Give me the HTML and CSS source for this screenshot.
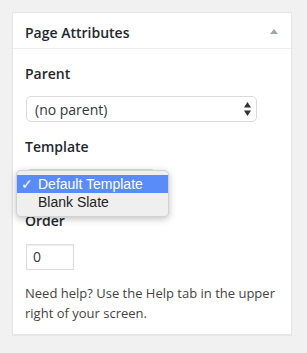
FILE: index.html
```html
<!DOCTYPE html>
<html lang="en">
<head>
  <meta charset="UTF-8">
  <title>Page Attributes</title>
  <meta name="viewport" content="width=device-width, initial-scale=1.0">
  <link rel="stylesheet" href="styles.css">
</head>
<body>
  <div class="postbox">
    <div class="hndle">
      <span>Page Attributes</span>
      <span class="toggle"></span>
    </div>

    <div class="inside">
      <p class="label">Parent</p>
      <div class="select">
        <span>(no parent)</span>
        <svg class="arrows" width="7" height="14" viewBox="0 0 7 14">
          <path d="M3.5 0 L7 5.5 L0 5.5 Z" fill="#333"/>
          <path d="M0 8.5 L7 8.5 L3.5 14 Z" fill="#333"/>
        </svg>
      </div>

      <p class="label">Template</p>
      <div class="select-wrap">
        <div class="select small"></div>
        <!-- open native menu -->
        <ul class="menu">
          <li class="active"><span class="check">✓</span>Default Template</li>
          <li><span class="check"></span>Blank Slate</li>
        </ul>
      </div>

      <p class="label">Order</p>
      <div class="order">0</div>

      <p class="help">Need help? Use the Help tab in the upper right of your screen.</p>
    </div>
  </div>
</body>
</html>
```

FILE: styles.css
```css
body { background: #f1f1f1; margin: 0; padding: 12px; font-family: "Open Sans", sans-serif; color: #444; }
.postbox { width: 280px; box-sizing: border-box; background: #fff; border: 1px solid #e5e5e5; box-shadow: 0 1px 1px rgba(0,0,0,.04); }
.hndle { display: flex; justify-content: space-between; align-items: center; height: 35px; padding: 0 13px 0 12px; border-bottom: 1px solid #eee; font-size: 14px; font-weight: 600; color: #23282d; }
.hndle span:first-child { padding-top: 3px; }
.toggle { width: 0; height: 0; border-left: 4px solid transparent; border-right: 4px solid transparent; border-bottom: 5px solid #a0a5aa; margin-top: 1px; }
.inside { padding: 0 12px 11px; }
.label { margin: 15px 0 12px; font-size: 14px; font-weight: 600; line-height: 20px; color: #23282d; }
.select { display: flex; justify-content: space-between; align-items: center; width: 231px; height: 26px; box-sizing: border-box; margin-left: 1px; padding: 0 5px 0 8px; border: 1px solid #dadada; border-radius: 5px; background: #fff; font-size: 14px; color: #32373c; }
.arrows { display: block; }
.select-wrap { position: relative; height: 27px; }
.select.small { width: 130px; }
.menu { position: absolute; left: -9px; top: 1px; width: 153px; box-sizing: border-box; margin: 0; padding: 4px 0 5px; list-style: none; background: #efefef; border: 1px solid rgba(0,0,0,.12); border-radius: 5px; box-shadow: 0 2px 7px rgba(0,0,0,.25); font-family: "Liberation Sans", Arial, sans-serif; font-size: 14px; line-height: 18px; color: #222; }
.menu li { display: flex; padding: 0 4px; }
.menu li.active { background: #5a8cf9; color: #fff; }
.check { width: 17px; font-family: "DejaVu Sans", sans-serif; font-size: 14px; font-weight: bold; }
.order { width: 48px; height: 26px; box-sizing: border-box; margin-top: 13px; margin-left: 1px; padding: 0 6px; border: 1px solid #ddd; box-shadow: inset 0 1px 2px rgba(0,0,0,.07); font-size: 14px; line-height: 24px; color: #32373c; }
.help { margin: 14px 0 0; font-size: 13px; line-height: 19.5px; color: #444; }
```
